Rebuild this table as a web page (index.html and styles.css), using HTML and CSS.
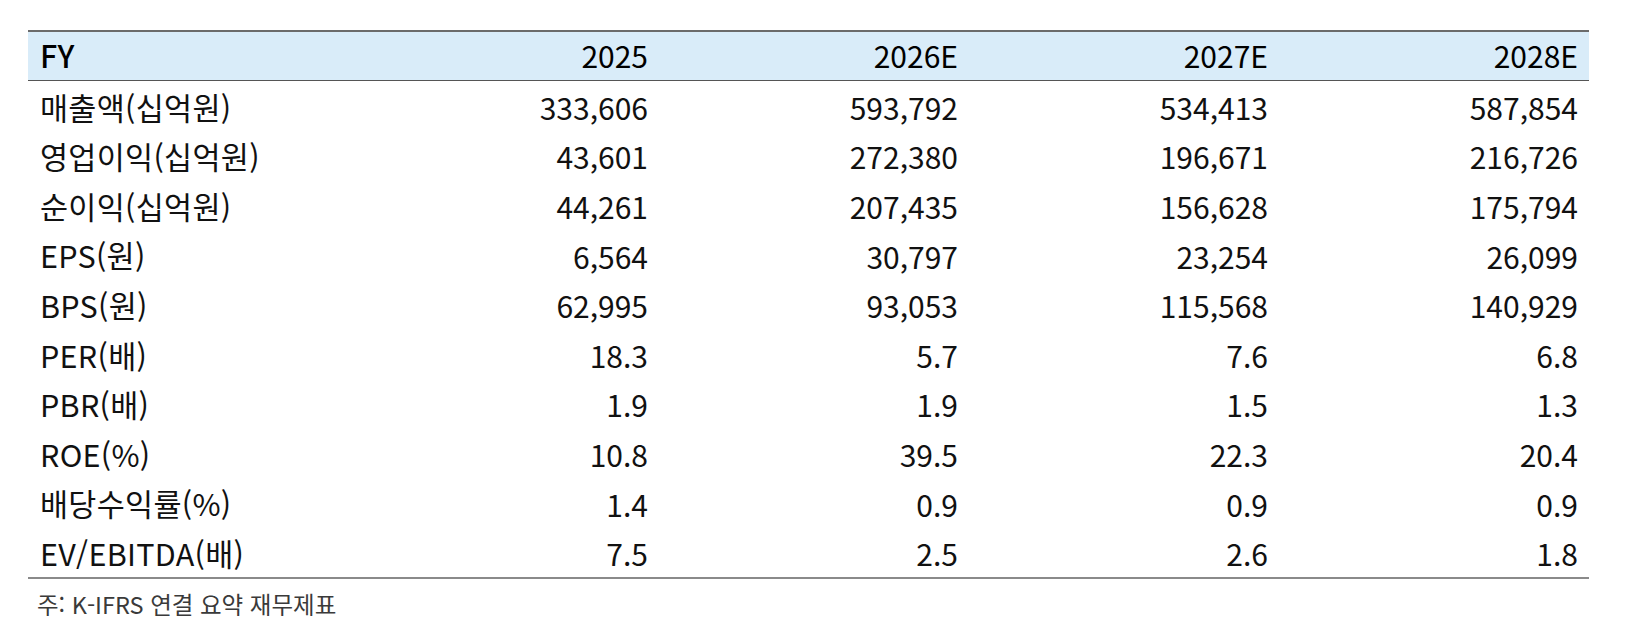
FILE: index.html
```html
<!DOCTYPE html>
<html lang="ko">
<head>
<meta charset="utf-8">
<title>FY Summary</title>
<link rel="stylesheet" href="styles.css">
</head>
<body>
<div class="page">
  <table class="fin">
    <colgroup>
      <col class="c-label">
      <col class="c-val">
      <col class="c-val">
      <col class="c-val">
      <col class="c-val">
    </colgroup>
    <thead>
      <tr class="head">
        <th class="lbl fy">FY</th>
        <th>2025</th>
        <th>2026E</th>
        <th>2027E</th>
        <th>2028E</th>
      </tr>
    </thead>
    <tbody>
      <tr><td class="lbl">매출액(십억원)</td><td>333,606</td><td>593,792</td><td>534,413</td><td>587,854</td></tr>
      <tr><td class="lbl">영업이익(십억원)</td><td>43,601</td><td>272,380</td><td>196,671</td><td>216,726</td></tr>
      <tr><td class="lbl">순이익(십억원)</td><td>44,261</td><td>207,435</td><td>156,628</td><td>175,794</td></tr>
      <tr><td class="lbl">EPS(원)</td><td>6,564</td><td>30,797</td><td>23,254</td><td>26,099</td></tr>
      <tr><td class="lbl">BPS(원)</td><td>62,995</td><td>93,053</td><td>115,568</td><td>140,929</td></tr>
      <tr><td class="lbl">PER(배)</td><td>18.3</td><td>5.7</td><td>7.6</td><td>6.8</td></tr>
      <tr><td class="lbl">PBR(배)</td><td>1.9</td><td>1.9</td><td>1.5</td><td>1.3</td></tr>
      <tr><td class="lbl">ROE(%)</td><td>10.8</td><td>39.5</td><td>22.3</td><td>20.4</td></tr>
      <tr><td class="lbl">배당수익률(%)</td><td>1.4</td><td>0.9</td><td>0.9</td><td>0.9</td></tr>
      <tr><td class="lbl">EV/EBITDA(배)</td><td>7.5</td><td>2.5</td><td>2.6</td><td>1.8</td></tr>
    </tbody>
  </table>
  <p class="note">주: K-IFRS 연결 요약 재무제표</p>
</div>
</body>
</html>
```

FILE: styles.css
```css
html, body {
  margin: 0;
  padding: 0;
  background: #ffffff;
}

body {
  font-family: "Noto Sans CJK KR", "Noto Sans", sans-serif;
  color: #111111;
}

.page {
  padding: 30px 0 0 28px;
}

.fin {
  width: 1561px;
  table-layout: fixed;
  border-collapse: collapse;
  border-spacing: 0;
}

.c-label {
  width: 321px;
}

.c-val {
  width: 310px;
}

.fin th,
.fin td {
  padding: 2px 11px 0 12px;
  text-align: right;
  font-size: 30px;
  line-height: 1;
  white-space: nowrap;
  vertical-align: middle;
}

.fin .lbl {
  text-align: left;
  font-size: 30.5px;
  letter-spacing: 0.3px;
}

.head th {
  height: 46px;
  padding-top: 0;
  padding-bottom: 2px;
  background: #d9ecf9;
  font-weight: 400;
  color: #000000;
  border-top: 2px solid #6b6b6b;
  border-bottom: 1px solid #555555;
}

.head .fy {
  font-weight: 500;
}

.fin tbody td {
  height: 47.6px;
  font-weight: 400;
}

.fin tbody tr:last-child td {
  border-bottom: 2px solid #8a8a8a;
}

.note {
  margin: 14px 0 0 9px;
  font-size: 23.5px;
  line-height: 1;
  color: #3a3a3a;
}
```
